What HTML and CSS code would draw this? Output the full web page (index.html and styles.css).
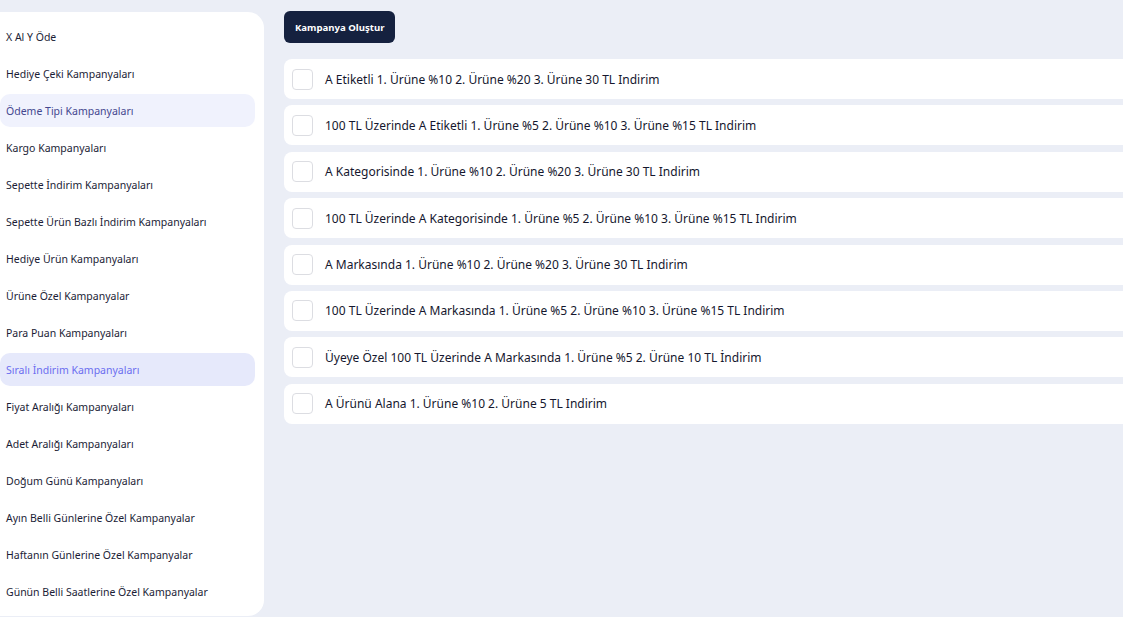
FILE: index.html
```html
<!doctype html>
<html lang="tr">
    <head>
        <meta charset="UTF-8" />
        <title>Kampanyalar</title>
        <link rel="stylesheet" href="styles.css">
    </head>
    <body>
        <div class="layout">
            <aside class="sidebar">
                <ul class="menu">
                    <li class="menu-item">X Al Y Öde</li>
                    <li class="menu-item">Hediye Çeki Kampanyaları</li>
                    <li class="menu-item hover">Ödeme Tipi Kampanyaları</li>
                    <li class="menu-item">Kargo Kampanyaları</li>
                    <li class="menu-item">Sepette İndirim Kampanyaları</li>
                    <li class="menu-item">Sepette Ürün Bazlı İndirim Kampanyaları</li>
                    <li class="menu-item">Hediye Ürün Kampanyaları</li>
                    <li class="menu-item">Ürüne Özel Kampanyalar</li>
                    <li class="menu-item">Para Puan Kampanyaları</li>
                    <li class="menu-item active">Sıralı İndirim Kampanyaları</li>
                    <li class="menu-item">Fiyat Aralığı Kampanyaları</li>
                    <li class="menu-item">Adet Aralığı Kampanyaları</li>
                    <li class="menu-item">Doğum Günü Kampanyaları</li>
                    <li class="menu-item">Ayın Belli Günlerine Özel Kampanyalar</li>
                    <li class="menu-item">Haftanın Günlerine Özel Kampanyalar</li>
                    <li class="menu-item">Günün Belli Saatlerine Özel Kampanyalar</li>
                </ul>
            </aside>

            <main class="content">
                <button class="create-btn">Kampanya Oluştur</button>

                <div class="campaign-list">
                    <label class="campaign-row"><span class="check"></span>A Etiketli 1. Ürüne %10 2. Ürüne %20 3. Ürüne 30 TL Indirim</label>
                    <label class="campaign-row"><span class="check"></span>100 TL Üzerinde A Etiketli 1. Ürüne %5 2. Ürüne %10 3. Ürüne %15 TL Indirim</label>
                    <label class="campaign-row"><span class="check"></span>A Kategorisinde 1. Ürüne %10 2. Ürüne %20 3. Ürüne 30 TL Indirim</label>
                    <label class="campaign-row"><span class="check"></span>100 TL Üzerinde A Kategorisinde 1. Ürüne %5 2. Ürüne %10 3. Ürüne %15 TL Indirim</label>
                    <label class="campaign-row"><span class="check"></span>A Markasında 1. Ürüne %10 2. Ürüne %20 3. Ürüne 30 TL Indirim</label>
                    <label class="campaign-row"><span class="check"></span>100 TL Üzerinde A Markasında 1. Ürüne %5 2. Ürüne %10 3. Ürüne %15 TL Indirim</label>
                    <label class="campaign-row"><span class="check"></span>Üyeye Özel 100 TL Üzerinde A Markasında 1. Ürüne %5 2. Ürüne 10 TL İndirim</label>
                    <label class="campaign-row"><span class="check"></span>A Ürünü Alana 1. Ürüne %10 2. Ürüne 5 TL Indirim</label>
                </div>
            </main>
        </div>
    </body>
</html>
```

FILE: styles.css
```css
body {
    margin: 0;
    font-family: "Noto Sans", sans-serif;
    background-color: #ebeef6;
    color: #1b1d36;
    overflow: hidden;
}
.layout {
    display: flex;
    gap: 20px;
    height: 617px;
}
.sidebar {
    width: 264px;
    flex-shrink: 0;
    margin-top: 12px;
    margin-bottom: 1px;
    background-color: #ffffff;
    border-radius: 0 16px 16px 0;
    box-sizing: border-box;
    padding: 8px 9px 0 0;
}
.menu {
    list-style: none;
    margin: 0;
    padding: 0;
}
.menu-item {
    height: 33px;
    margin-bottom: 4px;
    padding-left: 6px;
    display: flex;
    align-items: center;
    font-size: 10.5px;
    border-radius: 10px;
    color: #1b1d36;
}
.menu-item.hover {
    background-color: #f0f2fd;
    color: #44478f;
}
.menu-item.active {
    background-color: #e6e9fb;
    color: #6b6ef0;
}
.content {
    flex: 1;
    padding-top: 11px;
    min-width: 0;
}
.create-btn {
    height: 32px;
    padding: 0 11px;
    background-color: #15213f;
    color: #ffffff;
    border: none;
    border-radius: 6px;
    font-family: inherit;
    font-size: 9.6px;
    font-weight: 700;
    margin-bottom: 16px;
}
.campaign-list {
    display: flex;
    flex-direction: column;
    gap: 6.4px;
}
.campaign-row {
    height: 40px;
    display: flex;
    align-items: center;
    gap: 12px;
    padding-left: 8px;
    background-color: #ffffff;
    border-radius: 8px 0 0 8px;
    font-size: 12px;
    color: #15172e;
    white-space: nowrap;
}
.check {
    width: 19px;
    height: 19px;
    border: 1px solid #dcdde2;
    border-radius: 4px;
    flex-shrink: 0;
}
```
